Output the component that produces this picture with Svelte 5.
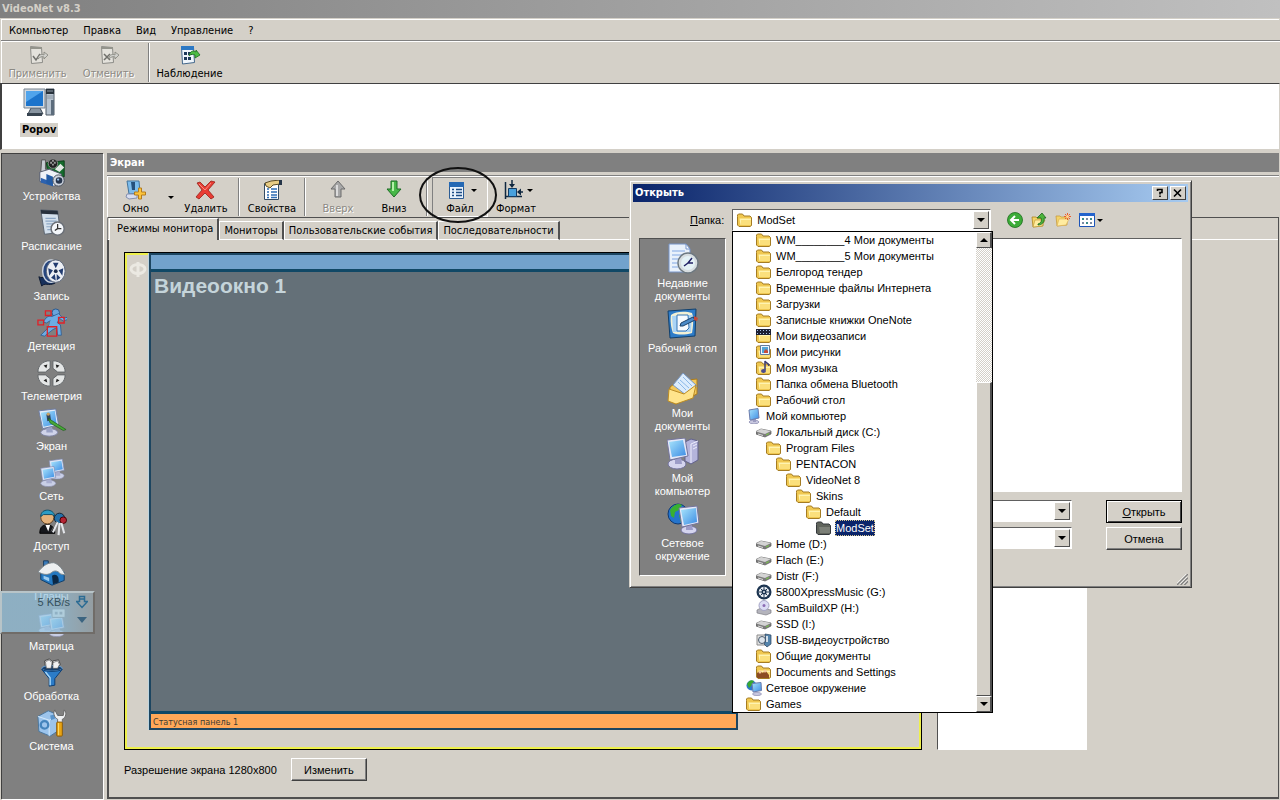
<script lang="ts">
    type Item = { name: string, icon: string, level?: number, off?: boolean }

    const menu = ['Компьютер', 'Правка', 'Вид', 'Управление', '?']

    const sections: Item[] = [
        {name: 'Устройства', icon: 'devices'},
        {name: 'Расписание', icon: 'schedule'},
        {name: 'Запись', icon: 'record'},
        {name: 'Детекция', icon: 'detect'},
        {name: 'Телеметрия', icon: 'ptz'},
        {name: 'Экран', icon: 'screen'},
        {name: 'Сеть', icon: 'net'},
        {name: 'Доступ', icon: 'access'},
        {name: 'Планы', icon: 'house'},
        {name: 'Матрица', icon: 'matrix'},
        {name: 'Обработка', icon: 'funnel'},
        {name: 'Система', icon: 'system'}
    ]

    const tabs = ['Режимы монитора', 'Мониторы', 'Пользовательские события', 'Последовательности']
    let tab = $state(0)

    const places: Item[] = [
        {name: 'Недавние документы', icon: 'recent'},
        {name: 'Рабочий стол', icon: 'desktop'},
        {name: 'Мои документы', icon: 'mydocs'},
        {name: 'Мой компьютер', icon: 'mycomp'},
        {name: 'Сетевое окружение', icon: 'network'}
    ]

    const tree: Item[] = [
        {name: 'WM________4 Мои документы', icon: 'folder', level: 2},
        {name: 'WM________5 Мои документы', icon: 'folder', level: 2},
        {name: 'Белгород тендер', icon: 'folder', level: 2},
        {name: 'Временные файлы Интернета', icon: 'folder', level: 2},
        {name: 'Загрузки', icon: 'folder', level: 2},
        {name: 'Записные книжки OneNote', icon: 'folder', level: 2},
        {name: 'Мои видеозаписи', icon: 'video', level: 2},
        {name: 'Мои рисунки', icon: 'pictures', level: 2},
        {name: 'Моя музыка', icon: 'music', level: 2},
        {name: 'Папка обмена Bluetooth', icon: 'folder', level: 2},
        {name: 'Рабочий стол', icon: 'folder', level: 2},
        {name: 'Мой компьютер', icon: 'computer', level: 1},
        {name: 'Локальный диск (C:)', icon: 'drive', level: 2},
        {name: 'Program Files', icon: 'folder', level: 3},
        {name: 'PENTACON', icon: 'folder', level: 4},
        {name: 'VideoNet 8', icon: 'folder', level: 5},
        {name: 'Skins', icon: 'folder', level: 6},
        {name: 'Default', icon: 'folder', level: 7},
        {name: 'ModSet', icon: 'dark', level: 8},
        {name: 'Home (D:)', icon: 'drive', level: 2},
        {name: 'Flach (E:)', icon: 'drive', level: 2},
        {name: 'Distr (F:)', icon: 'drive', level: 2},
        {name: '5800XpressMusic (G:)', icon: 'phone', level: 2},
        {name: 'SamBuildXP (H:)', icon: 'cd', level: 2},
        {name: 'SSD (I:)', icon: 'drive', level: 2},
        {name: 'USB-видеоустройство', icon: 'usb', level: 2},
        {name: 'Общие документы', icon: 'folder', level: 2},
        {name: 'Documents and Settings', icon: 'shared', level: 2},
        {name: 'Сетевое окружение', icon: 'globe', level: 1},
        {name: 'Games', icon: 'folder', level: 1}
    ]
    let folder = $state('ModSet')
</script>

{#snippet monitor(x: number, y: number)}
    <g transform="translate({x} {y})">
        <ellipse cx="9" cy="18" rx="8" ry="3.5" fill="#c9cfe6" stroke="#8488a8" stroke-width=".6"/>
        <path d="M7 13l5-1 1 6H7z" fill="#a9aed0"/>
        <path d="M1 2l14-2 2 12-14 3z" fill="#dfe6f6" stroke="#7d88b0" stroke-width=".7"/>
        <path d="M3 3.500l11-1.500 1.500 9-11 2.200z" fill="url(#glass)"/>
    </g>
{/snippet}

{#snippet big(name: string)}
    <svg class="big" viewBox="0 0 32 32" aria-hidden="true">
        {#if name === 'devices'}
            <path d="M10 5l19-2v17H12z" fill="#146c2c" stroke="#0b3c18"/>
            <path d="M5 2h4v10h7v3H4z" fill="#c8ccd4" stroke="#555"/>
            <circle cx="17" cy="6" r="5" fill="#222" stroke="#888"/>
            <path d="M14 4h2v2h-2zM18 4h2v2h-2zM16 6h2v2h-2zM16 2h2v2h-2z" fill="#999"/>
            <path d="M19 12l6-6 4 4-5 5z" fill="#e2e8e4"/>
            <path d="M3 15l10-3 13 5-2 11-6 2-15-5z" fill="#eef2f8" stroke="#50586a"/>
            <path d="M4 21l13 5v4L4 26z" fill="#2c62b0"/>
            <path d="M10 17l7 3v10l-7-3z" fill="#235ba4"/>
            <circle cx="23" cy="24" r="6" fill="#cdd4de" stroke="#444c58"/>
            <circle cx="23.500" cy="24" r="3.500" fill="#27364d"/>
            <circle cx="22.500" cy="23" r="1.200" fill="#9cc4ee"/>
        {:else if name === 'schedule'}
            <path d="M4 2l18 1 3 23-17 2z" fill="#d4e0ec" stroke="#59626e"/>
            <path d="M4 2l18 1 .6 4L4.500 6z" fill="#27303c"/>
            <path d="M9 11h11M9 14h12M10 17h11M10 20h8M11 23h6" stroke="#8ca6c4" stroke-width="1.300"/>
            <circle cx="22" cy="22" r="7" fill="#f3f6fa" stroke="#6b7078" stroke-width="1.600"/>
            <path d="M22 17v5h4M22 22l-3 2" stroke="#333" fill="none" stroke-width="1.300"/>
        {:else if name === 'record'}
            <path d="M2 20c5 3 8-2 8-6l9 13c-7 3-11-1-14 3z" fill="#17305c" stroke="#0b1830"/>
            <ellipse cx="15" cy="14" rx="9" ry="12" fill="#27467e" stroke="#ccd4e0" stroke-width="1.500"/>
            <ellipse cx="20" cy="14" rx="10" ry="12" fill="#eceff4" stroke="#5a6478"/>
            <circle cx="20" cy="14" r="2" fill="#1c2c4c"/>
            <path d="M17 5h6l-3 6zM12 11l5 2-4 6zM28 11l-5 2 4 6zM15 21l4-4 1 7zM25 21l-4-4v7z" fill="#223c70"/>
        {:else if name === 'detect'}
            <circle cx="20" cy="5" r="4" fill="#6aa4dc" stroke="#28568c"/>
            <path d="M16 9c-4-1-7 1-9 6l3 1 5-3-3 8-8 8 4 1 9-7 4-2 1 8h4l-1-11-4-3 3-4 4 3 5-2-1-2-4 1-5-5z" fill="#6cacE4" stroke="#28568c" stroke-width=".8"/>
            <path d="M15 10l5-1 3 3-5 9-6 1z" fill="#6cace4"/>
            <path d="M9 3h6v5H9zM1 13h6v5H1zM23 10h6v6h-6zM11 20h10v10H11z" fill="none" stroke="#e02028" stroke-width="1.400"/>
        {:else if name === 'ptz'}
            <g fill="#e4e6e6" stroke="#606468">
                <path d="M14 3v8l-5 4H1C1 8 6 3 14 3z"/>
                <path d="M17 3v8l5 4h8c0-7-5-12-13-12z"/>
                <path d="M14 30v-8l-5-4H1c0 7 5 12 13 12z"/>
                <path d="M17 30v-8l5-4h8c0 7-5 12-13 12z"/>
            </g>
            <path d="M7 8l4-1-1 4zM24 8l-4-1 1 4zM7 24l4 2-1-4zM24 24l-4 2 1-4z" fill="#222"/>
        {:else if name === 'screen'}
            <ellipse cx="13" cy="26" rx="9" ry="4" fill="#d0d4ea" stroke="#7f84a4"/>
            <path d="M10 20h6l1 6h-7z" fill="#9aa2c6"/>
            <path d="M2 3l18-2 3 17-17 4z" fill="#e2ebf8" stroke="#6c7ca4"/>
            <path d="M4 5l15-2 2 14-14 3z" fill="url(#glass)"/>
            <path d="M10 7l4-1 1 7-4 1z" fill="#33465c"/>
            <circle cx="12" cy="6.500" r="1.800" fill="#c8a060"/>
            <path d="M12 11l19 12-3 1-14-8z" fill="#47a838" stroke="#1d5c18" stroke-width=".7"/>
        {:else if name === 'net'}
            {@render monitor(12, 1)}
            {@render monitor(3, 9)}
        {:else if name === 'access'}
            <path d="M3 27c0-8 4-9 8-9s8 2 8 9z" fill="#16181c" stroke="#000"/>
            <path d="M9 18h5l-2 7z" fill="#fff"/>
            <circle cx="11" cy="10" r="7" fill="#e3b27c" stroke="#604020"/>
            <path d="M4 9c0-9 14-9 15 0l-3-2H7z" fill="#2c9cc4" stroke="#124c64"/>
            <circle cx="24" cy="11" r="5.500" fill="#2470a8" stroke="#123"/>
            <circle cx="28" cy="13" r="3.500" fill="#b42434" stroke="#400"/>
            <path d="M22 15l-5 11M24 16l-1 13M26 16l3 11" stroke="#e4e6ea" stroke-width="2.200"/>
            <path d="M21 14l-6 11" stroke="#777" stroke-width=".8"/>
        {:else if name === 'house'}
            <path d="M7 3h5v9H7z" fill="#3b7cba" stroke="#173c60"/>
            <path d="M4 14l12-7 13 8v9l-13 5-12-6z" fill="#2478c0" stroke="#0e3c68"/>
            <path d="M1 15c5-6 9-10 17-10 6 2 10 8 12 13l-5-1c-3-4-7-4-10-1-5 3-9 1-14-1z" fill="#eceff0" stroke="#7c868c"/>
            <path d="M16 19c4-3 8 0 7 7l-6 2z" fill="#0c2844"/>
            <path d="M7 19l6 2v4l-6-3z" fill="#9cccf0"/>
        {:else if name === 'matrix'}
            {@render monitor(1, 6)}
            {@render monitor(12, 9)}
            <rect x="16" y="1" width="14" height="9" rx="1" fill="#e4e4dc" stroke="#777"/>
            <path d="M19 4h3v3h-3zM24 4h3v3h-3z" fill="#888"/>
        {:else if name === 'funnel'}
            <path d="M8 3l5-2 4 3-1 6H9zM17 3l6-1 2 5-4 4-5-2z" fill="#f1f1f1" stroke="#444"/>
            <ellipse cx="16" cy="11" rx="11" ry="3" fill="#173f6c" stroke="#6aa8e0"/>
            <path d="M9 4l4-2 3 3-1 6h-5zM17 5l5-2 2 4-2 4h-5z" fill="#f1f1f1" stroke="#555" stroke-width=".7"/>
            <path d="M5 12c4 3 18 3 22 0l-8 10v7l-6 1v-8z" fill="#2c7cc8" stroke="#0c3c70"/>
            <path d="M9 15l5 6v8" stroke="#a8d8f8" stroke-width="1.500" fill="none"/>
        {:else if name === 'system'}
            <path d="M1 9l11-6 12 5-1 16-9 6L2 25z" fill="#9cc4ec" stroke="#47749c"/>
            <path d="M1 9l12 4 11-5M13 13v17" stroke="#d8ecfc" fill="none"/>
            <circle cx="8" cy="18" r="4" fill="none" stroke="#4484bc" stroke-width="2.500"/>
            <path d="M14 8l5-1 1 4-5 2z" fill="#5894cc"/>
            <path d="M19 2c-2 3-1 8 3 10v4h5v-4c4-2 5-7 2-10l-1 6h-6z" fill="#eef0f2" stroke="#666"/>
            <rect x="21" y="15" width="6" height="15" rx="1" fill="#e8a414" stroke="#86580a"/>
            <path d="M23 16v13" stroke="#ffe070"/>
        {:else if name === 'recent'}
            <path d="M2 1h17l4 5v23H2z" fill="#e9f1fb" stroke="#7694c8"/>
            <path d="M19 1v5h4z" fill="#fff" stroke="#7694c8"/>
            <path d="M5 8h13M5 12h13M5 16h8M5 20h6M5 24h6" stroke="#a4c0ec" stroke-width="1.500"/>
            <circle cx="21" cy="20" r="10" fill="#d7dde0" stroke="#6d7880" stroke-width="1.400"/>
            <circle cx="21" cy="20" r="7" fill="#e4f2f6"/>
            <path d="M25 15l-4 5h5M21 20l-4 3" stroke="#226" fill="none" stroke-width="1.500"/>
        {:else if name === 'desktop'}
            <path d="M1 3l28-2-1 27-25 2z" fill="#2e7cc8" stroke="#12406c"/>
            <path d="M4 7c5-4 15-4 21-2 2 6 1 14 0 20-7 2-14 2-19 0-2-5-3-13-2-18z" fill="#f3f0d4"/>
            <path d="M5 8l20-1-1 17H6z" fill="#aad4f6"/>
            <path d="M10 7h11l1 13-3 3h-9z" fill="#f6faff" stroke="#3474b4"/>
            <path d="M13 18l1-3 12-6 2 3-12 6z" fill="#4a8ac8" stroke="#1a4068"/>
            <path d="M27 8l4 2-1 3-3-1z" fill="#c84838"/>
        {:else if name === 'mydocs'}
            <path d="M3 14l8-6 19-2v15L9 31l-7-3z" fill="#f2c85c" stroke="#ac7c1c"/>
            <path d="M16 0l14 13-11 9L6 12z" fill="#dcecfc" stroke="#7898c4"/>
            <path d="M13 7l9 8M16 4l9 9M11 9l8 8" stroke="#8cb8e8"/>
            <path d="M2 16l15 5 12-9-3 13-17 6-8-3z" fill="#ffe48c" stroke="#bc8c24"/>
        {:else if name === 'mycomp'}
            <path d="M18 4l6-3 7 2v19l-7 4-6-3z" fill="#b4b4dc" stroke="#62628c"/>
            <path d="M24 6l7-3M24 6v19M26 8l4-2M26 11l4-2" stroke="#ececfc"/>
            <ellipse cx="10" cy="26" rx="9" ry="5" fill="#d4d4ee" stroke="#72729c"/>
            <path d="M8 20l6-1 1 7H8z" fill="#9c9cc8"/>
            <path d="M0 2l18-2 3 18L3 22z" fill="#e4e8f8" stroke="#74749c"/>
            <path d="M2 4l14-2 3 15L5 19z" fill="url(#glass)"/>
        {:else}
            <circle cx="11" cy="11" r="10" fill="#2474cc" stroke="#0c3874"/>
            <path d="M3 7c4-6 9-7 12-5l-3 5-4 2-1 6-3-2zM12 12l6-3 2 8-6 3z" fill="#38b030"/>
            <ellipse cx="22" cy="27" rx="8" ry="4" fill="#d4d4ee" stroke="#72729c"/>
            <path d="M19 22h6l1 5h-7z" fill="#9c9cc8"/>
            <path d="M12 5l18-2 2 17-17 4z" fill="#e4e8f8" stroke="#74749c"/>
            <path d="M14 7l15-2 1 14-13 3z" fill="url(#glass)"/>
        {/if}
    </svg>
{/snippet}

{#snippet small(name: string)}
    <svg class="small" viewBox="0 0 16 16" aria-hidden="true">
        {#if name === 'folder' || name === 'video' || name === 'pictures' || name === 'music' || name === 'shared'}
            <path d="M.5 4.500V3l1-1h4l1.500 2h6l1.500 1.500v8L13 14.500H2L.5 13z" fill="#f0c850" stroke="#a47c24"/>
            <path d="M2.500 6.500h11.500v6.500H3.500z" fill="#fff4b0"/>
            <path d="M4 8h10v5H4z" fill="#fbe07c"/>
            {#if name === 'video'}
                <path d="M0 1h15v6H0z" fill="#1c2034"/>
                <path d="M1 2h1v1H1zM4 2h1v1H4zM7 2h1v1H7zM10 2h1v1h-1zM13 2h1v1h-1zM1 5h1v1H1zM4 5h1v1H4zM7 5h1v1H7zM10 5h1v1h-1zM13 5h1v1h-1z" fill="#a8c4e8"/>
            {:else if name === 'pictures'}
                <path d="M4.500 1.500h9v9h-9z" fill="#eef6ff" stroke="#667c9c"/>
                <path d="M6 3h6v6H6z" fill="#52a4d8"/>
                <path d="M8 9V7l2-2 2 2v2z" fill="#c84c38"/>
            {:else if name === 'music'}
                <path d="M9 10V1c1 2 4 2 4 5" fill="none" stroke="#3c3c74" stroke-width="1.500"/>
                <ellipse cx="7.500" cy="11" rx="2.500" ry="2" fill="#4c4c8c"/>
            {:else if name === 'shared'}
                <path d="M1 14V9l3-2 3 2 2-3 4 5v3z" fill="#8c4c24"/>
                <circle cx="4" cy="8" r="1.500" fill="#f4c89c"/>
                <circle cx="9" cy="7" r="1.500" fill="#f4c89c"/>
            {/if}
        {:else if name === 'dark'}
            <path d="M.5 4.500V3l1-1h4l1.500 2h6l1.500 1.500v8L13 14.500H2L.5 13z" fill="#60645c" stroke="#34383c"/>
            <path d="M3 7h11v6H4z" fill="#7c8078"/>
        {:else if name === 'drive'}
            <path d="M0 7.500L5 5l10 2v3l-6 3-9-3z" fill="#7c7c7c" stroke="#5c5c5c" stroke-width=".7"/>
            <path d="M0 7.500L5 5l10 2-6 3z" fill="#d4d4d4"/>
            <path d="M2 10l5 1.500" stroke="#ddd"/>
            <path d="M10 11l3-1.500" stroke="#7c4"/>
        {:else if name === 'computer'}
            <ellipse cx="8" cy="14" rx="5" ry="1.800" fill="#c8c8e0" stroke="#7c7ca4" stroke-width=".6"/>
            <path d="M7 10h3v4H7z" fill="#9c9cc0"/>
            <path d="M3 2l9-1.500 1 9.500-9 2z" fill="url(#glass)" stroke="#6c7cac"/>
        {:else if name === 'globe'}
            <circle cx="5.500" cy="5.500" r="5" fill="#2c78cc"/>
            <path d="M1 4c3-5 5-4 7-3L5 6 3 8z" fill="#38a830"/>
            <ellipse cx="11" cy="14" rx="4.500" ry="1.600" fill="#c8c8e0" stroke="#7c7ca4" stroke-width=".6"/>
            <path d="M6 3.500l9-1 .5 8L7 12z" fill="url(#glass)" stroke="#6c7cac"/>
        {:else if name === 'phone'}
            <circle cx="8" cy="8" r="7.500" fill="#1c3450"/>
            <circle cx="8" cy="8" r="4" fill="none" stroke="#f0f4f8" stroke-width="2.500"/>
            <path d="M8 3v2M8 11v2M3 8h2M11 8h2M4.500 4.500L6 6M10 10l1.500 1.500M11.500 4.500L10 6M6 10l-1.500 1.500" stroke="#1c3450"/>
            <circle cx="8" cy="8" r="1" fill="#e4ecf4"/>
        {:else if name === 'cd'}
            <path d="M1 10l4-2 10 2v3l-5 2-9-2z" fill="#b4b4bc" stroke="#7c7c84" stroke-width=".7"/>
            <circle cx="8" cy="5.500" r="5" fill="#dcdcf4" stroke="#a4a4c4"/>
            <circle cx="8" cy="5.500" r="1.500" fill="#8c6cb4"/>
        {:else if name === 'usb'}
            <path d="M1 3h9v10H1z" fill="#e4e4e4" stroke="#8c8c8c"/>
            <circle cx="6" cy="8" r="3.500" fill="#dce4ec" stroke="#4c5c6c"/>
            <path d="M9 2l6 1v9l-4 3-3-3 2-3z" fill="#5484ac" stroke="#28405c" stroke-width=".7"/>
            <path d="M11 4v6" stroke="#fff" stroke-width="1.500"/>
        {:else if name === 'back'}
            <circle cx="8" cy="8" r="7.500" fill="#3cac38" stroke="#1c6c1c" stroke-width=".8"/>
            <path d="M8 4L4 8l4 4M4.500 8H12" stroke="#fff" stroke-width="2" fill="none"/>
        {:else if name === 'up'}
            <path d="M1 5h4l1 1h6v8l-10 1z" fill="#f4d468" stroke="#ac8420" stroke-width=".8"/>
            <path d="M2 15l2-7h10l-3 6z" fill="#ffeca0" stroke="#bc9430" stroke-width=".6"/>
            <path d="M7 12c3-1 4-3 3-6H6l5-5 4 5h-2c1 4-2 7-6 7z" fill="#4cb43c" stroke="#1c641c" stroke-width=".8"/>
        {:else if name === 'new'}
            <path d="M1 4h4l1 1h6v8l-10 1z" fill="#f4d468" stroke="#c89c40" stroke-width=".8"/>
            <path d="M2 14l2-7h10l-3 6z" fill="#ffeca0" stroke="#d8ac50" stroke-width=".6"/>
            <path d="M12.500 1v7M9 4.500h7M10 2l5 5M15 2l-5 5" stroke="#ec5c2c"/>
            <circle cx="12.500" cy="4.500" r="1.500" fill="#ffd890"/>
        {:else}
            <path d="M.5 1.500h15v13H.5z" fill="#fff" stroke="#1c54b8"/>
            <path d="M0 1h16v3H0z" fill="#2464cc"/>
            <path d="M3 6h2v2H3zM11 6h2v2h-2zM7 10h2v2H7z" fill="#3c8c8c"/>
            <path d="M7 6h2v2H7zM3 10h2v2H3zM11 10h2v2h-2z" fill="#7c8ca4"/>
        {/if}
    </svg>
{/snippet}

{#snippet tool(name: string)}
    <svg class="toolicon" viewBox="0 0 22 20" aria-hidden="true">
        {#if name === 'apply' || name === 'cancel'}
            <path d="M3.500 1.500l11 1 1 15-11 1z" fill="#e4e2dc" stroke="#8c8c88"/>
            <path d="M3 2h12v2H3z" fill="#94948c"/>
            {#if name === 'apply'}
                <path d="M6 11l3 4 4-6" stroke="#70706c" stroke-width="1.500" fill="none"/>
            {:else}
                <path d="M6 9l6 6M12 9l-6 6" stroke="#70706c" stroke-width="1.500"/>
            {/if}
            <path d="M11 12c2-3 4-3 6-2V7l4 3-4 4v-2c-2-1-4 0-6 2z" fill="#d0d0cc" stroke="#84847c" stroke-width=".8"/>
        {:else if name === 'watch'}
            <path d="M2.500 1.500l12 1 1 15-12 1.500z" fill="#f0f6fc" stroke="#44688c"/>
            <path d="M2 1h13v4H2z" fill="#2c78c4"/>
            <path d="M5 7h3v3H5zM9 7h4v3H9zM5 12h3v3H5zM9 12h3v3H9z" fill="#1c3858"/>
            <path d="M10 11c1-5 4-6 7-4V5l4 5-5 3v-3c-2-1-4-1-6 1z" fill="#4cbc44" stroke="#1c6c20" stroke-width=".8"/>
        {:else if name === 'window'}
            <path d="M2 1h12l1 12-11 1z" fill="#7cbcec" stroke="#44749c"/>
            <path d="M6 2h4v8H7z" fill="#24507c"/>
            <path d="M2 14h10v4l-8 1-3-2z" fill="#d8def0" stroke="#8490b0"/>
            <path d="M13.500 8h3v4h4v3h-4v4h-3v-4h-4v-3h4z" fill="#fcc43c" stroke="#b47c1c"/>
        {:else if name === 'delete'}
            <path d="M2 3l3-1 5 5 6-6 4 1-7 8 6 7-3 2-6-6-6 6-3-2 6-7z" fill="#e83c34" stroke="#982018" stroke-width=".8"/>
            <path d="M4 4l6 6 6-7" stroke="#fc8c80" fill="none"/>
        {:else if name === 'props'}
            <path d="M3.500 3.500h14v16h-14z" fill="#fff" stroke="#344c64"/>
            <path d="M6 9h2M10 9h6M6 12h2M10 12h6M6 15h2M10 15h6M6 17.500h2M10 17.500h6" stroke="#2c6cb4" stroke-width="1.500"/>
            <path d="M4 3l6-2 9-1v4l-7 1-3 3-4-2z" fill="#e8cc84" stroke="#5c4c24"/>
            <path d="M18 0h3v5h-3z" fill="#243448"/>
        {:else if name === 'top'}
            <path d="M11 1l7 8h-4v8H8V9H4z" fill="#a8a8a8" stroke="#6c6c6c"/>
            <path d="M10 5v11" stroke="#dcdcdc" stroke-width="2"/>
        {:else if name === 'bottom'}
            <path d="M8 1h6v8h4l-7 8-7-8h4z" fill="#48b848" stroke="#1c6c24"/>
            <path d="M10 2v9" stroke="#b4f0a8" stroke-width="2"/>
        {:else if name === 'file'}
            <path d="M3.500 2.500h14v16h-14z" fill="#e8f2fc" stroke="#2c5c94"/>
            <path d="M3 2h15v5H3z" fill="#2468b4"/>
            <path d="M6 9.500h2M10 9.500h6M6 12.500h2M10 12.500h6M6 15.500h2M10 15.500h6" stroke="#1c4c84" stroke-width="1.500"/>
        {:else}
            <path d="M3.500 2v17M3 16.500h17M10 0v6" stroke="#102840" stroke-width="1.500"/>
            <path d="M7 4l3 4 3-4z" fill="#102840"/>
            <path d="M6.500 8.500h8v8h-8z" fill="#48a0dc" stroke="#143c64"/>
            <path d="M16 12h5" stroke="#102840" stroke-width="1.500"/>
            <path d="M19 8.500v7L15 12z" fill="#102840"/>
        {/if}
    </svg>
{/snippet}

{#snippet toolbutton(label: string, icon: string, off = false)}
    <button class="tool" disabled={off}>
        {@render tool(icon)}
        <span>{label}</span>
    </button>
{/snippet}

<svg class="defs" aria-hidden="true">
    <linearGradient id="glass" x1="0" y1="0" x2="1" y2="1">
        <stop offset="0" stop-color="#a8e4fc"/>
        <stop offset="1" stop-color="#3c8ce4"/>
    </linearGradient>
</svg>

<div class="app">
    <header class="title">VideoNet v8.3</header>
    <nav class="menu">
        {#each menu as m}
            <button>{m}</button>
        {/each}
    </nav>
    <div class="toolbar main">
        {@render toolbutton('Применить', 'apply', true)}
        {@render toolbutton('Отменить', 'cancel', true)}
        <i class="sep"></i>
        {@render toolbutton('Наблюдение', 'watch')}
    </div>

    <section class="computers">
        <button class="pc">
            <svg viewBox="0 0 32 29" aria-hidden="true">
                <path d="M23 1h8v26h-8z" fill="#b8c4d0" stroke="#4c5864"/>
                <path d="M23 1h8v5h-8z" fill="#28323c"/>
                <path d="M24 3h6M24 8h6M24 10h6" stroke="#8c98a4"/>
                <path d="M28 12h3v15h-3z" fill="#5c6c7c"/>
                <path d="M8 20h9l3 6H5z" fill="#8894a0" stroke="#384450"/>
                <path d="M1 1h21v19H1z" fill="#d0d8e0" stroke="#788490"/>
                <path d="M3 3h17v15H3z" fill="#1c74cc"/>
                <path d="M3 3h17L3 14z" fill="#50a4ec"/>
                <path d="M4 25h15v3H4z" fill="#384450"/>
            </svg>
            <span>Popov</span>
        </button>
    </section>

    <div class="work">
        <nav class="side">
            {#each sections as s}
                <button>
                    {@render big(s.icon)}
                    <span>{s.name}</span>
                </button>
            {/each}
            <div class="speed">
                <span>5 KB/s</span>
                <svg viewBox="0 0 12 32" aria-hidden="true">
                    <path d="M3.500 1.500h5v5h3L6 12.500.5 6.500h3zM4 4h4" fill="none" stroke="#2c6c94" stroke-width="1.500"/>
                    <path d="M1 22h10l-5 6z" fill="#3c6480"/>
                </svg>
            </div>
        </nav>

        <main>
            <h1>Экран</h1>
            <div class="toolbar">
                {@render toolbutton('Окно', 'window')}
                <button class="drop" aria-label="Тип окна"><i class="arrow"></i></button>
                {@render toolbutton('Удалить', 'delete')}
                <i class="sep"></i>
                {@render toolbutton('Свойства', 'props')}
                <i class="sep"></i>
                {@render toolbutton('Вверх', 'top', true)}
                {@render toolbutton('Вниз', 'bottom')}
                <i class="sep"></i>
                <div class="pressed">
                    <button class="tool">
                        <span class="pair">{@render tool('file')}<i class="arrow"></i></span>
                        <span>Файл</span>
                    </button>
                    <svg class="ring" viewBox="0 0 78 57" aria-hidden="true">
                        <ellipse cx="39" cy="28" rx="38" ry="27" fill="none" stroke="#111" stroke-width="2"/>
                    </svg>
                </div>
                <button class="tool">
                    <span class="pair">{@render tool('format')}<i class="arrow"></i></span>
                    <span>Формат</span>
                </button>
            </div>

            <div class="tabs" role="tablist">
                {#each tabs as t, i}
                    <button role="tab" aria-selected={tab === i} class:on={tab === i} onclick={() => tab = i}>{t}</button>
                {/each}
            </div>

            <div class="panel">
                <div class="stage">
                    <div class="canvas">
                        <svg class="emblem" viewBox="0 0 24 24" aria-hidden="true">
                            <path d="M13 5v15" stroke="#ebe9e2" stroke-width="3"/>
                            <ellipse cx="13" cy="12" rx="7" ry="4.500" fill="none" stroke="#ebe9e2" stroke-width="3"/>
                        </svg>
                        <div class="videowin">
                            <div class="cap"></div>
                            <div class="video">Видеоокно 1</div>
                            <div class="status">Статусная панель 1</div>
                        </div>
                    </div>
                    <div class="list"></div>
                </div>
                <footer>
                    <span>Разрешение экрана 1280x800</span>
                    <button class="btn">Изменить</button>
                </footer>
            </div>
        </main>
    </div>

    <div class="dialog" role="dialog" aria-label="Открыть">
        <div class="dtitle">
            <b>Открыть</b>
            <button aria-label="Справка">
                <svg viewBox="0 0 10 10"><path d="M2.500 3V1.500h4.500v3H5v2M5 7.500v1.500" fill="none" stroke="#000" stroke-width="1.600"/></svg>
            </button>
            <button aria-label="Закрыть">
                <svg viewBox="0 0 10 10"><path d="M1 1.500l7 7M8 1.500l-7 7" stroke="#000" stroke-width="1.600"/></svg>
            </button>
        </div>
        <div class="lookin">
            <label for="folder"><u>П</u>апка:</label>
            <div class="combo withicon">
                {@render small('folder')}
                <select id="folder" bind:value={folder}>
                    {#each tree as f}
                        <option>{f.name}</option>
                    {/each}
                </select>
                <i class="knob"><i class="arrow"></i></i>
            </div>
            <button class="nav" aria-label="Назад">{@render small('back')}</button>
            <button class="nav" aria-label="Вверх">{@render small('up')}</button>
            <button class="nav" aria-label="Создать папку">{@render small('new')}</button>
            <button class="nav" aria-label="Меню Вид">{@render small('view')}<i class="arrow"></i></button>
        </div>
        <div class="dbody">
            <nav class="places">
                {#each places as p}
                    <button>
                        {@render big(p.icon)}
                        <span>{p.name}</span>
                    </button>
                {/each}
            </nav>
            <div class="files">
                <div class="filelist"></div>
                <div class="line">
                    <div class="combo">
                        <select aria-label="Имя файла"></select>
                        <i class="knob"><i class="arrow"></i></i>
                    </div>
                    <button class="btn default"><u>О</u>ткрыть</button>
                </div>
                <div class="line">
                    <div class="combo">
                        <select aria-label="Тип файлов"></select>
                        <i class="knob"><i class="arrow"></i></i>
                    </div>
                    <button class="btn">Отмена</button>
                </div>
            </div>
        </div>
        <svg class="grip" viewBox="0 0 12 12" aria-hidden="true">
            <path d="M0 12L12 0M4 12l8-8M8 12l4-4" stroke="#808080" stroke-width="1.500"/>
            <path d="M-1 11L11-1M3 11l8-8M7 11l4-4" stroke="#fff" stroke-width=".8"/>
        </svg>

        <div class="popup">
            <ul role="listbox" aria-label="Папка">
                {#each tree as f}
                    <li role="option" aria-selected={folder === f.name} style:--level={f.level}>
                        {@render small(f.icon)}
                        <span>{f.name}</span>
                    </li>
                {/each}
            </ul>
            <div class="scroll">
                <button aria-label="Прокрутить вверх"><i class="arrow flip"></i></button>
                <i class="track"></i>
                <i class="thumb"></i>
                <button aria-label="Прокрутить вниз"><i class="arrow"></i></button>
            </div>
        </div>
    </div>
</div>

<style>
:global(body){
    margin: 0;
    background: #d4d0c8;
}

*{
    box-sizing: border-box;
}

.defs{
    position: absolute;
    width: 0;
    height: 0;
}

.app{
    position: relative;
    display: flex;
    flex-direction: column;
    min-height: 100vh;
    overflow: hidden;
    background: #d4d0c8;
    color: #000;
    font: 11px/14px "DejaVu Sans Condensed", "DejaVu Sans", sans-serif;
}

button, select{
    margin: 0;
    padding: 0;
    border: 0;
    border-radius: 0;
    background: none;
    color: inherit;
    font: inherit;
}

svg{
    display: block;
    flex: none;
}

i{
    display: block;
    flex: none;
}

.arrow{
    width: 6px;
    border: solid transparent;
    border-width: 3px 3px 0;
    border-top-color: #000;
}

.knob .arrow, .scroll .arrow{
    width: 8px;
    border-width: 4px 4px 0;
}

.flip{
    transform: rotate(180deg);
}

.title{
    height: 18px;
    padding: 2px;
    background: linear-gradient(90deg, #808080, #c0c0c0);
    color: #d4d0c8;
    font-weight: bold;
}

.menu{
    display: flex;
    gap: 15px;
    height: 22px;
    margin: 1px 1px 0;
    padding: 0 7px;
    border-top: 1px solid #fff;
    border-left: 1px solid #fff;
}

.toolbar{
    display: flex;
    height: 42px;
    border: solid #fff;
    border-width: 1px 0 0 1px;
}

.toolbar.main{
    margin-left: 1px;
    box-shadow: 0 -1px #808080;
}

.tool{
    display: flex;
    flex-direction: column;
    align-items: center;
    justify-content: flex-end;
    gap: 2px;
    width: 56px;
    padding-bottom: 2px;
    white-space: nowrap;
}

.main .tool{
    width: 71px;
}

.tool:disabled{
    color: #8c8a84;
    text-shadow: 1px 1px #fff;
}

.toolicon{
    width: 22px;
    height: 20px;
}

.sep{
    width: 10px;
    padding: 1px 4px;
    background: linear-gradient(90deg, #808080 1px, #fff 1px) content-box;
}

.drop{
    display: grid;
    place-items: center;
    width: 14px;
}

.pair{
    display: flex;
    align-items: center;
    gap: 3px;
    padding-left: 3px;
}

.pressed{
    position: relative;
    display: flex;
    box-shadow: inset 1px 1px #808080, inset -1px -1px #fff;
}

.ring{
    position: absolute;
    left: -13px;
    top: -10px;
    width: 78px;
    height: 57px;
}

.computers{
    height: 67px;
    padding: 4px 18px;
    border: 1px solid #d4d0c8;
    border-top-color: #404040;
    border-left: 2px solid #404040;
    background: #fff;
}

.pc{
    display: flex;
    flex-direction: column;
    align-items: center;
    gap: 6px;
    font-weight: bold;
}

.pc svg{
    width: 32px;
    height: 29px;
}

.pc span{
    padding: 0 2px;
    background: #d4d0c8;
}

.work{
    display: flex;
    flex: 1;
    gap: 4px;
    padding: 3px 1px 1px;
}

.side{
    position: relative;
    display: flex;
    flex-direction: column;
    flex: none;
    width: 102px;
    padding: 4px 2px 0 0;
    border: solid #404040;
    border-width: 1px 0 0 1px;
    background: #808080;
    box-shadow: 1px 1px #fff;
    color: #fff;
    font-family: "Liberation Sans", Arial, sans-serif;
}

.side button{
    display: flex;
    flex-direction: column;
    align-items: center;
    gap: 1px;
    height: 50px;
}

.side .big{
    width: 30px;
    height: 30px;
}

.speed{
    position: absolute;
    top: 437px;
    left: -2px;
    display: flex;
    justify-content: flex-end;
    gap: 6px;
    width: 95px;
    height: 43px;
    padding: 2px 5px;
    border: 2px solid;
    border-color: #b8c4c8 #706c68 #706c68 #b8c4c8;
    background: linear-gradient(90deg, #94c4e0b0 60%, #a4b4bc90);
    color: #34505c;
}

.speed svg{
    width: 12px;
    height: 32px;
}

main{
    display: flex;
    flex-direction: column;
    flex: 1;
    min-width: 0;
}

h1{
    height: 19px;
    margin: 0 0 3px;
    padding: 3px;
    background: #808080;
    box-shadow: 0 3px #d4d0c8, 0 4px #808080;
    color: #fff;
    font-size: 11px;
    line-height: 14px;
}

main .toolbar{
    height: 42px;
    margin-top: 1px;
    border-bottom: 1px solid #505050;
}

main .tool{
    padding-bottom: 1px;
}

.tabs{
    display: flex;
    align-items: flex-end;
    height: 22px;
    padding-left: 1px;
    border-left: 1px solid #808080;
    border-right: 1px solid #505050;
    box-shadow: inset 0 -1px #fff;
}

.tabs button{
    height: 19px;
    padding: 0 4px;
    border: solid #fff;
    border-width: 1px 2px 1px 1px;
    border-right-color: #505050;
    white-space: nowrap;
}

.tabs .on{
    height: 22px;
    padding: 0 4px 1px 7px;
    border-bottom: 0;
    background: #d4d0c8;
}

.panel{
    display: flex;
    flex-direction: column;
    flex: 1;
    padding: 12px 0 0 15px;
    border: solid #505050;
    border-width: 0 1px 2px 2px;
}

.stage{
    display: flex;
    flex: 1;
    gap: 15px;
    padding-right: 191px;
}

.canvas{
    display: flex;
    flex: 1;
    padding-bottom: 19px;
    border: 1px solid #000;
    box-shadow: inset 0 0 0 2px #eef04c;
}

.emblem{
    width: 24px;
    height: 24px;
    margin-top: 4px;
}

.videowin{
    display: flex;
    flex-direction: column;
    width: 74%;
    border: 2px solid #1c4560;
    box-shadow: -1px 0 #bcd4e0;
}

.cap{
    height: 14px;
    background: #72a2cc;
}

.video{
    flex: 1;
    padding: 2px 3px;
    border: solid #104866;
    border-width: 3px 0;
    background: #647078;
    color: #c4d4da;
    font: bold 21px/24px "Liberation Sans", Arial, sans-serif;
}

.status{
    height: 14px;
    padding: 1px 2px;
    background: #ffa858;
    color: #3c3c34;
    font-size: 9px;
}

.list{
    width: 150px;
    border: 1px solid #fff;
    border-left: 1px solid #505050;
    background: #fff;
}

footer{
    display: flex;
    align-items: center;
    gap: 14px;
    height: 47px;
    padding-bottom: 8px;
    font-family: "Liberation Sans", Arial, sans-serif;
}

.btn{
    width: 76px;
    height: 23px;
    border: 1px solid #fff;
    border-right-color: #404040;
    border-bottom-color: #404040;
    box-shadow: inset -1px -1px #808080;
    background: #d4d0c8;
}

.default{
    border-color: #000;
    box-shadow: inset 1px 1px #fff, inset -1px -1px #404040;
}

.dialog{
    position: absolute;
    left: 629px;
    top: 180px;
    width: 563px;
    height: 408px;
    padding: 3px;
    border: 1px solid #d4d0c8;
    border-right-color: #404040;
    border-bottom-color: #404040;
    box-shadow: inset 1px 1px #fff, inset -1px -1px #808080;
    background: #d4d0c8;
    font-family: "Liberation Sans", Arial, sans-serif;
}

.dtitle{
    display: flex;
    align-items: center;
    gap: 2px;
    height: 18px;
    padding: 0 2px;
    background: linear-gradient(90deg, #0a246a, #a6caf0);
    color: #fff;
}

.dtitle b{
    flex: 1;
    font-family: "DejaVu Sans Condensed", "DejaVu Sans", sans-serif;
}

.dtitle button{
    display: grid;
    place-items: center;
    width: 16px;
    height: 14px;
    border: 1px solid #fff;
    border-right-color: #404040;
    border-bottom-color: #404040;
    background: #d4d0c8;
}

.dtitle svg{
    width: 10px;
    height: 10px;
}

.lookin{
    display: flex;
    align-items: center;
    gap: 8px;
    padding: 7px 0 7px 57px;
}

.lookin .combo{
    width: 259px;
    margin-right: 8px;
}

.nav{
    display: flex;
    align-items: center;
    gap: 2px;
}

.combo{
    position: relative;
    display: flex;
    height: 22px;
    padding: 1px;
    border: 1px solid #606060;
    border-right-color: #fff;
    border-bottom-color: #fff;
    background: #fff;
}

.combo select{
    flex: 1;
    min-width: 0;
    padding: 0 4px;
    appearance: none;
    outline: 0;
}

.withicon{
    padding-left: 4px;
    align-items: center;
}

.knob{
    display: grid;
    place-items: center;
    width: 16px;
    height: 18px;
    border: 1px solid #fff;
    border-right-color: #505050;
    border-bottom-color: #505050;
    background: #d4d0c8;
    pointer-events: none;
}

.small{
    width: 16px;
    height: 16px;
}

.dbody{
    display: flex;
    gap: 8px;
    padding: 0 6px;
}

.places{
    display: flex;
    flex-direction: column;
    width: 87px;
    height: 338px;
    padding-top: 4px;
    border: 1px solid #505050;
    border-right-color: #fff;
    border-bottom-color: #fff;
    background: #808080;
    color: #fff;
}

.places button{
    display: flex;
    flex-direction: column;
    align-items: center;
    gap: 2px;
    height: 65px;
    padding: 0 8px;
    line-height: 13px;
}

.places span{
    white-space: nowrap;
    width: min-content;
}

.places button:not(:nth-child(2)) span{
    white-space: normal;
}

.places .big{
    width: 32px;
    height: 32px;
}

.files{
    display: flex;
    flex-direction: column;
    flex: 1;
    gap: 4px;
}

.filelist{
    height: 254px;
    margin-bottom: 4px;
    border: 1px solid #606060;
    border-right-color: #fff;
    border-bottom-color: #fff;
    background: #fff;
}

.line{
    display: flex;
    gap: 34px;
    padding-left: 90px;
}

.line .combo{
    flex: 1;
}

.grip{
    position: absolute;
    right: 3px;
    bottom: 2px;
    width: 11px;
    height: 11px;
}

.popup{
    position: absolute;
    left: 102px;
    top: 50px;
    display: flex;
    width: 261px;
    border: 1px solid #000;
    background: #fff;
}

ul{
    flex: 1;
    margin: 0;
    padding: 0;
    list-style: none;
}

li{
    display: flex;
    align-items: center;
    gap: 3px;
    height: 16px;
    padding-left: calc(3px + var(--level) * 10px);
    white-space: nowrap;
}

li span{
    padding: 1px;
}

li[aria-selected="true"] span{
    background: #0a246a;
    color: #fff;
    outline: 1px dotted #d8c890;
    outline-offset: -1px;
}

.scroll{
    display: flex;
    flex-direction: column;
    width: 16px;
}

.scroll button, .thumb{
    display: grid;
    place-items: center;
    height: 16px;
    border: 1px solid #fff;
    border-right: 2px solid #505050;
    border-bottom-color: #505050;
    background: #d4d0c8;
}

.track{
    flex: 135;
    background: repeating-conic-gradient(#d4d0c8 0 25%, #fff 0 50%) 0 0 / 2px 2px;
}

.thumb{
    flex: 313;
}
</style>
